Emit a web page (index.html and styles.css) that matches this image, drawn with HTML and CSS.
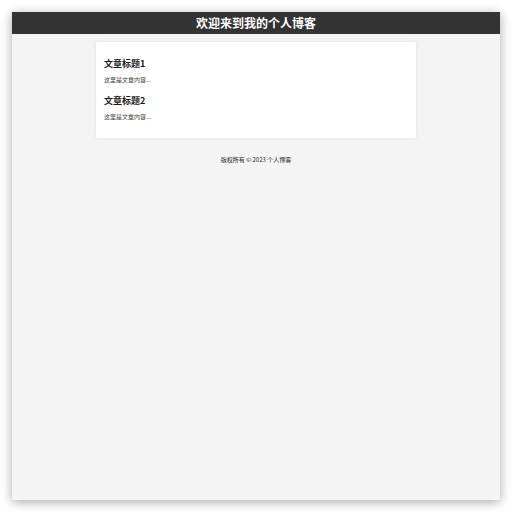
FILE: index.html
```html
<!DOCTYPE html>
<html lang="zh-CN">
<head>
<meta charset="utf-8">
<title>个人博客</title>
<link rel="stylesheet" href="styles.css">
</head>
<body>
<div class="frame">
  <header class="site-header">
    <h1 class="site-title">欢迎来到我的个人博客</h1>
  </header>
  <main class="content">
    <section class="card">
      <article class="post">
        <h2 class="post-title">文章标题1</h2>
        <p class="post-body">这里是文章内容...</p>
      </article>
      <article class="post">
        <h2 class="post-title">文章标题2</h2>
        <p class="post-body">这里是文章内容...</p>
      </article>
    </section>
  </main>
  <footer class="site-footer">版权所有 © 2023 个人博客</footer>
</div>
</body>
</html>
```
FILE: styles.css
```css
html, body {
  margin: 0;
  padding: 0;
  background: #ffffff;
}
body {
  font-family: "Noto Sans CJK SC", "Noto Sans", "DejaVu Sans", sans-serif;
}
.frame {
  margin: 12px;
  width: 488px;
  height: 488px;
  background: #f4f4f4;
  box-shadow: 0 2px 10px rgba(0, 0, 0, 0.35);
  display: flex;
  flex-direction: column;
  align-items: center;
}
.site-header {
  align-self: stretch;
  height: 22px;
  background: #333333;
  color: #ffffff;
  display: flex;
  align-items: center;
  justify-content: center;
}
.site-title {
  margin: 0;
  font-size: 12px;
  line-height: 22px;
  font-weight: bold;
}
.content {
  margin-top: 8px;
  width: 320px;
}
.card {
  background: #ffffff;
  padding: 10px 8px 6px;
  box-shadow: 0 0 4px rgba(0, 0, 0, 0.08);
}
.post-title {
  margin: 6px 0 6.5px;
  font-size: 9px;
  line-height: 11px;
  font-weight: bold;
  color: #1a1a1a;
}
.post-body {
  margin: 0 0 12.5px;
  font-size: 6px;
  line-height: 7px;
  color: #444444;
}
.site-footer {
  margin-top: 17.5px;
  font-size: 6px;
  line-height: 7px;
  color: #222222;
}
```
